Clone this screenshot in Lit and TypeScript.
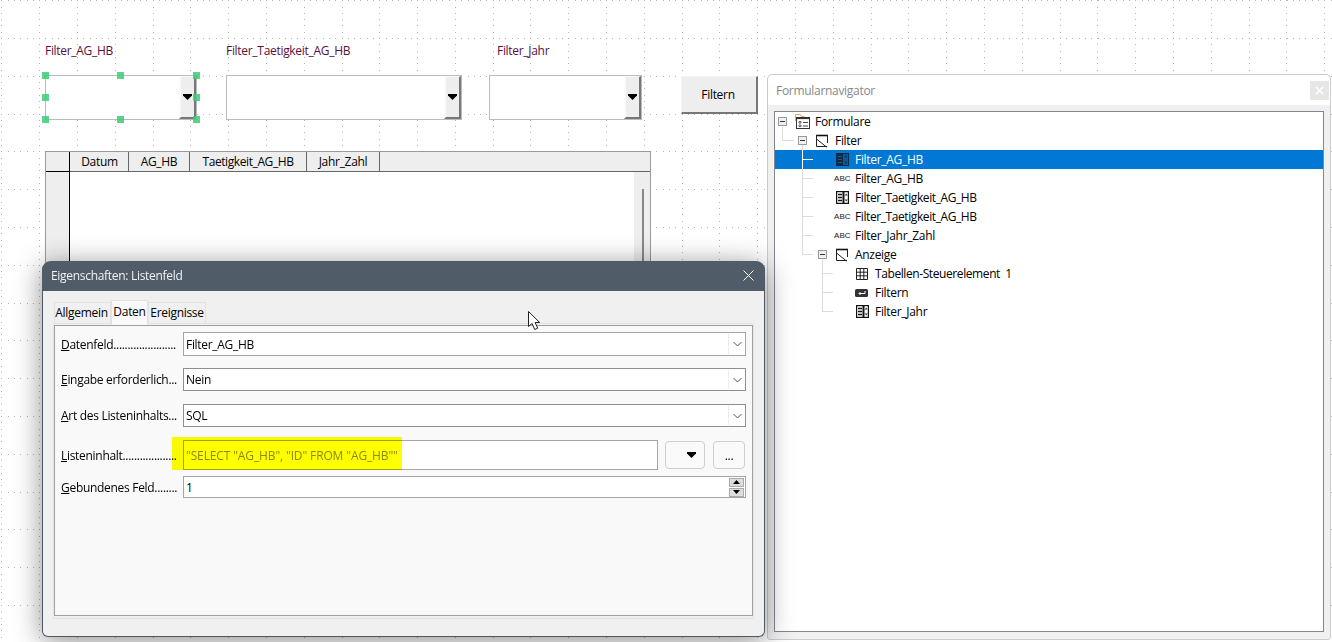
import { LitElement, html, css, svg } from "lit";
import { customElement } from "lit/decorators.js";

function gridPath(): string {
  const s = 6.3;
  let d = "";
  for (let m = 0; m * 37.8 < 1332; m++) {
    const x = Math.round(1.3 + m * 37.8);
    for (let k = 0; k * s < 642; k++) d += `M${x} ${Math.round(0.2 + k * s)}h1v1h-1z`;
  }
  for (let m = 0; m * 37.8 < 642; m++) {
    const y = Math.round(0.2 + m * 37.8);
    for (let k = 0; k * s < 1332; k++) d += `M${Math.round(1.3 + k * s)} ${y}h1v1h-1z`;
  }
  return d;
}

const arrow = html`<svg class="tri" width="9" height="6" viewBox="0 0 9 6"><path d="M0 0h9v1.5L4.5 6 0 1.5z" fill="#000"/></svg>`;
const chevron = html`<svg width="9" height="6" viewBox="0 0 9 6"><path d="M.5 1l4 4 4-4" fill="none" stroke="#555" stroke-width="1"/></svg>`;

type Icon = "forms" | "form" | "list" | "abc" | "grid" | "btn";
interface Row { d: number; icon: Icon; text: string; exp?: boolean; sel?: boolean; tight?: boolean }
const rows: Row[] = [
  { d: 0, icon: "forms", text: "Formulare", exp: true },
  { d: 1, icon: "form", text: "Filter", exp: true },
  { d: 2, icon: "list", text: "Filter_AG_HB", sel: true },
  { d: 2, icon: "abc", text: "Filter_AG_HB" },
  { d: 2, icon: "list", text: "Filter_Taetigkeit_AG_HB", tight: true },
  { d: 2, icon: "abc", text: "Filter_Taetigkeit_AG_HB", tight: true },
  { d: 2, icon: "abc", text: "Filter_Jahr_Zahl" },
  { d: 2, icon: "form", text: "Anzeige", exp: true },
  { d: 3, icon: "grid", text: "Tabellen-Steuerelement  1", tight: true },
  { d: 3, icon: "btn", text: "Filtern" },
  { d: 3, icon: "list", text: "Filter_Jahr" },
];

function icon(k: Icon, sel = false) {
  switch (k) {
    case "forms":
      return html`<svg width="16" height="16" viewBox="0 0 16 16">
        <path d="M.5 7V.5h5l1 2h3" fill="none" stroke="#e8a860" stroke-width="1"/>
        <rect x="1.5" y="3.5" width="13" height="11" fill="#fff" stroke="#333"/>
        <path d="M1.5 3.5h13v1.6h-13z" fill="#333"/>
        <path d="M4 7.5h2v1.6H4zM4 11h2v1.6H4z" fill="none" stroke="#444" stroke-width=".8"/>
        <path d="M8 8.5h5M8 12h5" stroke="#444"/></svg>`;
    case "form":
      return html`<svg width="14" height="14" viewBox="0 0 14 14">
        <path d="M1 1.5h12" stroke="#111" stroke-width="1.6"/>
        <path d="M1.5 1v11.5h10.5M12.5 1v8M1.5 5l10 8" fill="none" stroke="#222" stroke-width="1"/></svg>`;
    case "list":
      return sel
        ? html`<svg class="lst" width="13" height="13" viewBox="0 0 13 13">
            <rect x=".5" y=".5" width="12" height="12" fill="#0a5a9c" stroke="#0c2a44"/>
            <path d="M1 1h6v11H1z" fill="#0c2a44"/>
            <path d="M2 3.5h4M2 6.5h4M2 9.5h4" stroke="#1c5a8c" stroke-width="1"/>
            <path d="M9.8 2.2l1.5 2h-3zM9.8 10.8l1.5-2h-3z" fill="#0c2a44"/></svg>`
        : html`<svg class="lst" width="13" height="13" viewBox="0 0 13 13">
            <rect x=".6" y=".6" width="11.8" height="11.8" fill="#fff" stroke="#111" stroke-width="1.2"/>
            <path d="M7.5 1v11" stroke="#111" stroke-width="2"/>
            <path d="M2 3.5h4M2 6.5h4M2 9.5h4" stroke="#111" stroke-width="1.3"/>
            <path d="M10.2 2.4l1.5 2h-3zM10.2 10.6l1.5-2h-3z" fill="#333"/></svg>`;
    case "abc":
      return html`<span class="abc">ABC</span>`;
    case "grid":
      return html`<svg width="14" height="14" viewBox="0 0 14 14"><path d="M1.5 1.5h11v11h-11zM1.5 5.2h11M1.5 8.8h11M5.2 1.5v11M8.8 1.5v11" fill="none" stroke="#222"/></svg>`;
    case "btn":
      return html`<svg width="14" height="14" viewBox="0 0 14 14"><rect x="0" y="3" width="13" height="8" rx="1.5" fill="#333"/><path d="M10 5v2.5H4M5.5 6L4 7.5 5.5 9" fill="none" stroke="#fff"/></svg>`;
  }
}

const guides = svg`
  <path d="M7.5 15V28.5H19" />
  <path d="M27.5 33V142.5H38M27.5 47.5H38M27.5 66.5H38M27.5 85.5H38M27.5 104.5H38M27.5 123.5H38" />
  <path d="M47.5 147V199.5H58M47.5 161.5H58M47.5 180.5H58" />
`;

@customElement("app-root")
export class AppRoot extends LitElement {
  static styles = css`
    :host {
      display: block;
      width: 1332px;
      height: 642px;
      position: relative;
      overflow: hidden;
      background: #fff;
      font-family: "Open Sans", "Noto Sans", sans-serif;
      font-size: 12px;
      letter-spacing: -0.3px;
      color: #000;
    }
    .tight { letter-spacing: -0.41px; }
    .grid { position: absolute; left: 0; top: 0; }
    .name { position: absolute; top: 42px; color: #5a1040; line-height: 17px; white-space: pre; }
    .n1 { left: 45px; } .n2 { left: 226px; } .n3 { left: 497px; }

    .combo {
      position: absolute; top: 75px; height: 45px; box-sizing: border-box;
      border: 1px solid #bbb; background: #fff;
      display: flex; justify-content: flex-end;
    }
    .c1 { left: 45px; width: 152px; } .c2 { left: 226px; width: 236px; } .c3 { left: 489px; width: 153px; }
    .cbtn {
      width: 17px; box-sizing: border-box; background: #eee;
      border-left: 2px solid #fafafa; border-top: 1px solid #fafafa;
      border-right: 2px solid #777; border-bottom: 2px solid #777;
      display: flex; align-items: center; justify-content: center;
    }
    .tri { display: block; }
    .push {
      position: absolute; left: 681px; top: 76px; width: 77px; height: 38px; box-sizing: border-box;
      background: #eee; border: 1px solid #f4f4f4; border-right: 2px solid #777; border-bottom: 2px solid #777;
      display: flex; align-items: center; justify-content: center; padding-right: 2px;
    }
    .handle { position: absolute; width: 7px; height: 7px; background: rgba(60, 205, 120, 0.85); }
    .h1 { left: 42px; top: 72px; } .h2 { left: 117px; top: 72px; } .h3 { left: 193px; top: 72px; }
    .h4 { left: 42px; top: 94px; } .h5 { left: 193px; top: 94px; }
    .h6 { left: 42px; top: 116px; } .h7 { left: 117px; top: 116px; } .h8 { left: 193px; top: 116px; }

    .table {
      position: absolute; left: 45px; top: 151px; width: 606px; height: 150px; box-sizing: border-box;
      border: 1px solid #999; background: #fff; display: flex; flex-direction: column;
    }
    .thead { height: 20px; box-sizing: border-box; flex: none; display: flex; background: #eee; border-bottom: 1px solid #666; }
    .thead div { box-sizing: border-box; border-right: 1px solid #666; text-align: center; line-height: 19px; }
    .thead .corner { width: 24px; border-right-color: #000; }
    .t1 { width: 59px; padding-left: 1px; } .t2 { width: 61px; } .t3 { width: 117px; } .t4 { width: 73px; }
    .tbody { flex: 1; display: flex; }
    .rowhead { width: 23px; background: #eee; border-right: 1px solid #000; border-top: 1px solid #000; margin-top: -1px; }
    .tfill { flex: 1; }
    .vscroll { width: 16px; background: #eee; display: flex; justify-content: center; padding-top: 17px; box-sizing: border-box; }
    .vscroll div { width: 2px; height: 100%; background: #888; margin-left: 1px; }

    .nav {
      position: absolute; left: 767px; top: 74px; width: 564px; height: 566px; box-sizing: border-box;
      border: 1px solid #ccc; border-radius: 5px 5px 3px 3px; background: #f0f0f0;
      display: flex; flex-direction: column;
    }
    .navtitle {
      height: 30px; flex: none; background: #fff; color: #888; display: flex; align-items: center;
      justify-content: space-between; padding: 0 1px 0 8px; border-radius: 5px 5px 0 0;
    }
    .navclose { width: 19px; height: 19px; background: #e6e6e6; display: flex; align-items: center; justify-content: center; }
    .tree {
      position: relative; flex: 1; margin: 6px 6px 7px 6px; border: 1px solid #858590; background: #fff;
      padding: 0;
    }
    .row { height: 19px; display: flex; align-items: center; white-space: pre; box-sizing: border-box; }
    .row.sel { background: #0078d4; color: #fff; }
    .exp { width: 17px; flex: none; display: flex; }
    .box {
      width: 9px; height: 9px; box-sizing: border-box; border: 1px solid #999; background: #f0f0f0;
      display: flex; align-items: center; justify-content: center;
    }
    .box::before { content: ""; width: 5px; height: 1px; background: #334; }
    .ico { width: 20px; flex: none; display: flex; align-items: center; }
    .lst { margin-left: 1px; }
    .abc { font: 8px "Liberation Sans", sans-serif; letter-spacing: 0.1px; color: #222; margin-left: -1px; }
    .lines { position: absolute; left: 0; top: 0; pointer-events: none; fill: none; stroke: #dcdcdc; }
    .lines .white { stroke: #fff; }

    .dialog {
      position: absolute; left: 42px; top: 261px; width: 723px; height: 376px; box-sizing: border-box;
      background: #f0f0f0; border: 1px solid #4d5966; border-top: 0; border-radius: 9px 9px 6px 6px;
      box-shadow: 0 4px 28px rgba(0, 0, 0, 0.45);
      display: flex; flex-direction: column; z-index: 2;
    }
    .dtitle {
      height: 30px; flex: none; margin: 0 -1px; background: #515c69; color: #f2f2f2;
      border-radius: 9px 9px 0 0; display: flex; align-items: center; justify-content: space-between;
      padding: 0 11px 1px 9px; box-sizing: border-box;
    }
    .dtitle svg { display: block; }
    .tabs { display: flex; align-items: flex-end; margin: 9px 0 0 11px; height: 23px; flex: none; position: relative; z-index: 1; }
    .tab {
      box-sizing: border-box; height: 21px; border: 1px solid #e2e2e2; border-bottom: 0; line-height: 20px;
      text-align: center; background: #f0f0f0;
    }
    .tab.a { width: 57px; padding-right: 2px; } .tab.b { width: 37px; height: 25px; margin-bottom: -2px; background: #f9f9f9; line-height: 21px; padding-bottom: 3px; }
    .tab.c { width: 58px; }
    .panelwrap { margin: 0 10px; border: 1px solid #e4e4e4; height: 296px; box-sizing: border-box; }
    .panel {
      margin: 1px 0 0 0; height: 291px; box-sizing: border-box; border: 1px solid #a0a0a0; background: #f9f9f9;
      padding: 6px 6px 0 6px; display: flex; flex-direction: column;
    }
    .frow { display: flex; align-items: center; position: relative; flex: none; }
    .r1 { height: 24px; } .r2 { height: 23px; margin-top: 12px; } .r3 { height: 23px; margin-top: 13px; }
    .r4 { height: 30px; margin-top: 13px; } .r5 { height: 22px; margin-top: 6px; }
    .lab { width: 122px; flex: none; white-space: pre; overflow: hidden; }
    .lab u { text-decoration: underline; }
    .field {
      flex: 1; align-self: stretch; box-sizing: border-box; border: 1px solid #a2a5ac; background: #fff;
      display: flex; align-items: center; justify-content: space-between; padding-left: 2px;
    }
    .dark { border-color: #8b8f99; }
    .chev {
      width: 17px; align-self: stretch; margin: 1px 0; background: #fff; border-left: 1px solid #eee;
      display: flex; align-items: center; justify-content: center; box-sizing: border-box;
    }
    .query { color: #8c8c8c; flex: none; width: 475px; letter-spacing: -0.13px; }
    .rbtn {
      flex: none; height: 28px; box-sizing: border-box; border: 1px solid #cfcfcf; border-radius: 4px; background: #fafafa;
      display: flex; align-items: center;
    }
    .rb1 { width: 40px; margin-left: 7px; justify-content: flex-end; padding-right: 8px; }
    .rb2 { width: 32px; margin: 0 1px 0 8px; justify-content: center; line-height: 1; padding-top: 2px; }
    .spin { width: 15px; display: flex; flex-direction: column; gap: 1px; margin-right: 1px; }
    .spin div {
      height: 9px; box-sizing: border-box; background: #ddd; border: 1px solid #aaa;
      display: flex; align-items: center; justify-content: center;
    }
    .mark {
      position: absolute; left: 111px; top: -3px; width: 230px; height: 33px;
      background: #ffff00; mix-blend-mode: multiply; pointer-events: none;
    }
    .cursor { position: absolute; left: 528px; top: 311px; z-index: 3; display: block; }
  `;

  private gridD = gridPath();

  render() {
    return html`
      <svg class="grid" width="1332" height="642" shape-rendering="crispEdges"><path d="${this.gridD}" fill="#b4b4b4"/></svg>

      <div class="name n1">Filter_AG_HB</div>
      <div class="name n2">Filter_Taetigkeit_AG_HB</div>
      <div class="name n3">Filter_Jahr</div>

      <div class="combo c1"><div class="cbtn">${arrow}</div></div>
      <div class="combo c2"><div class="cbtn">${arrow}</div></div>
      <div class="combo c3"><div class="cbtn">${arrow}</div></div>
      <div class="push">Filtern</div>
      ${[1, 2, 3, 4, 5, 6, 7, 8].map((i) => html`<div class="handle h${i}"></div>`)}

      <div class="table">
        <div class="thead">
          <div class="corner"></div><div class="t1">Datum</div><div class="t2">AG_HB</div>
          <div class="t3 tight">Taetigkeit_AG_HB</div><div class="t4">Jahr_Zahl</div>
        </div>
        <div class="tbody">
          <div class="rowhead"></div><div class="tfill"></div>
          <div class="vscroll"><div></div></div>
        </div>
      </div>

      <div class="nav">
        <div class="navtitle">
          <span>Formularnavigator</span>
          <div class="navclose"><svg width="9" height="9" viewBox="0 0 9 9"><path d="M1 1l7 7M8 1L1 8" stroke="#fff" stroke-width="1.6"/></svg></div>
        </div>
        <div class="tree">
          ${rows.map(
            (r) => html`<div class="row ${r.sel ? "sel" : ""}" style="padding-left:${3 + 20 * r.d}px">
              <div class="exp">${r.exp ? html`<div class="box"></div>` : ""}</div>
              <div class="ico">${icon(r.icon, r.sel)}</div>
              <span class="${r.tight ? "tight" : ""}">${r.text}</span>
            </div>`
          )}
          <svg class="lines" width="200" height="230" shape-rendering="crispEdges">
            ${guides}
            <path class="white" d="M27.5 38V57M28 47.5H38"/>
          </svg>
        </div>
      </div>

      <div class="dialog">
        <div class="dtitle">
          <span>Eigenschaften: Listenfeld</span>
          <svg width="11" height="11" viewBox="0 0 11 11"><path d="M.5.5l10 10M10.5.5l-10 10" stroke="#fff" stroke-width="1"/></svg>
        </div>
        <div class="tabs">
          <div class="tab a">Allgemein</div><div class="tab b">Daten</div><div class="tab c">Ereignisse</div>
        </div>
        <div class="panelwrap">
          <div class="panel">
            <div class="frow r1">
              <div class="lab"><u>D</u>atenfeld......................</div>
              <div class="field"><span>Filter_AG_HB</span><div class="chev">${chevron}</div></div>
            </div>
            <div class="frow r2">
              <div class="lab"><u>E</u>ingabe erforderlich...</div>
              <div class="field dark"><span>Nein</span><div class="chev">${chevron}</div></div>
            </div>
            <div class="frow r3">
              <div class="lab"><u>A</u>rt des Listeninhalts...</div>
              <div class="field dark"><span>SQL</span><div class="chev">${chevron}</div></div>
            </div>
            <div class="frow r4">
              <div class="lab"><u>L</u>isteninhalt...................</div>
              <div class="field query"><span>"SELECT "AG_HB", "ID" FROM "AG_HB""</span></div>
              <div class="rbtn rb1">${arrow}</div>
              <div class="rbtn rb2">...</div>
              <div class="mark"></div>
            </div>
            <div class="frow r5">
              <div class="lab"><u>G</u>ebundenes Feld........</div>
              <div class="field"><span>1</span>
                <div class="spin">
                  <div><svg width="7" height="4" viewBox="0 0 7 4"><path d="M3.5 0L7 4H0z"/></svg></div>
                  <div><svg width="7" height="4" viewBox="0 0 7 4"><path d="M0 0h7L3.5 4z"/></svg></div>
                </div>
              </div>
            </div>
          </div>
        </div>
      </div>

      <svg class="cursor" width="14" height="20" viewBox="0 0 14 20">
        <path d="M.5.5v15l3.6-3 2.6 6 3-1.3-2.6-5.7h4.6z" fill="#fff" stroke="#222" stroke-width="1"/>
      </svg>
    `;
  }
}
